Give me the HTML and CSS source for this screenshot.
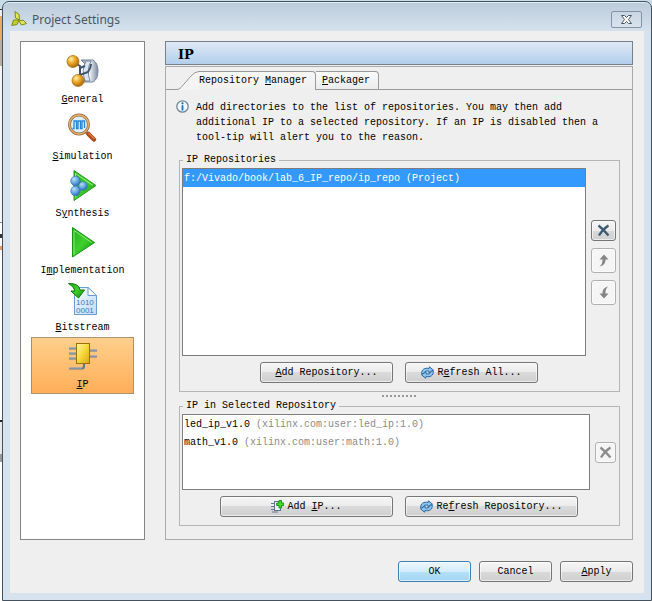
FILE: index.html
```html
<!DOCTYPE html>
<html lang="en">
<head>
    <meta charset="utf-8">
    <title>Project Settings</title>
    <link rel="stylesheet" href="styles.css">
</head>
<body>
    <!-- shared icons -->
    <svg class="defs" width="0" height="0" aria-hidden="true">
        <defs>
            <radialGradient id="gold" cx="35%" cy="30%" r="75%">
                <stop offset="0" stop-color="#fff3b0"/>
                <stop offset="0.4" stop-color="#f0b030"/>
                <stop offset="1" stop-color="#a86408"/>
            </radialGradient>
            <radialGradient id="blueBall" cx="35%" cy="30%" r="75%">
                <stop offset="0" stop-color="#b8e0fb"/>
                <stop offset="0.6" stop-color="#5c9fdc"/>
                <stop offset="1" stop-color="#2f66ad"/>
            </radialGradient>
            <linearGradient id="green" x1="0" y1="0" x2="1" y2="1">
                <stop offset="0" stop-color="#1fae1a"/>
                <stop offset="0.5" stop-color="#3fd02c"/>
                <stop offset="1" stop-color="#0f8a10"/>
            </linearGradient>
            <linearGradient id="steel" x1="0" y1="0" x2="1" y2="0">
                <stop offset="0" stop-color="#76869b"/>
                <stop offset="0.5" stop-color="#eef3f9"/>
                <stop offset="1" stop-color="#7d8a9f"/>
            </linearGradient>
            <linearGradient id="chip" x1="0" y1="0" x2="1" y2="1">
                <stop offset="0" stop-color="#fdf6a8"/>
                <stop offset="0.5" stop-color="#f6d83c"/>
                <stop offset="1" stop-color="#d9a510"/>
            </linearGradient>
            <linearGradient id="page" x1="0" y1="0" x2="1" y2="1">
                <stop offset="0" stop-color="#f4faff"/>
                <stop offset="1" stop-color="#bfdcf5"/>
            </linearGradient>
            <symbol id="icon-refresh" viewBox="0 0 13 13">
                <path d="M0.800 8C0 3.500 4 1.500 8 2.500L8.500 0.800 12.500 4.200 8 7.200 8 5.200C5 4.500 3.200 5.500 3 8z" fill="#8cc4ee" stroke="#1d5d9b" stroke-width="0.900"/>
                <path d="M12.200 5C13 9.500 9 11.500 5 10.500L4.500 12.200 0.500 8.800 5 5.800 5 7.800C8 8.500 9.800 7.500 10 5z" fill="#8cc4ee" stroke="#1d5d9b" stroke-width="0.900"/>
            </symbol>
            <symbol id="icon-up" viewBox="0 0 13 13">
                <path d="M7 0.500L11.500 5.500H8.500C8.500 9 7 11.500 2.500 12.500C5 10.500 5.500 8.500 5.500 5.500H2.500z"/>
            </symbol>
        </defs>
    </svg>

    <div class="dialog">
        <header class="titlebar">
            <svg class="logo" viewBox="0 0 16 16" aria-hidden="true">
                <path d="M4 0.500L8 3.500 8.500 9 4.500 7z" fill="#e2e65a" stroke="#7f8a10"/>
                <path d="M0.800 14.500L2.500 9 8 9 6 13.500z" fill="#c5cf28" stroke="#7f8a10"/>
                <path d="M8 10L12 9 15.500 12.500 10.500 14z" fill="#dfe65c" stroke="#7f8a10"/>
            </svg>
            <h1>Project Settings</h1>
            <button type="button" class="close" aria-label="Close">
                <svg viewBox="0 0 13 11" aria-hidden="true">
                    <path d="M1.500 1.500H4.500L6.500 3.500 8.500 1.500H11.500L8.500 5.500 11.500 9.500H8.500L6.500 7.500 4.500 9.500H1.500L4.500 5.500z" fill="#fff" stroke="#4b5563"/>
                </svg>
            </button>
        </header>

        <div class="content">
            <div class="main">
                <nav class="sidebar">
                    <button type="button" class="nav-item">
                        <svg viewBox="0 0 36 36" aria-hidden="true">
                            <path d="M16 5H28Q33 8 33 16T28 27H18Q23 22 22 15T16 5z" fill="url(#steel)" stroke="#77849a"/>
                            <path d="M21 6Q16 15 20 26L25 26Q21 15 26 6z" fill="#dbe4ef" stroke="#66758c" stroke-width="0.800"/>
                            <path d="M8 7L15 11V20L13 25M15 13L20 11M15 20L23 17Q26 13 26 9" fill="none" stroke="#42536d" stroke-width="2"/>
                            <circle cx="8" cy="6.500" r="6" fill="url(#gold)" stroke="#a4640c" stroke-width="0.700"/>
                            <circle cx="13" cy="25.500" r="6" fill="url(#gold)" stroke="#a4640c" stroke-width="0.700"/>
                        </svg>
                        <span><u>G</u>eneral</span>
                    </button>
                    <button type="button" class="nav-item">
                        <svg viewBox="0 0 36 36" aria-hidden="true">
                            <path d="M20 19L27 26" stroke="#8a7a70" stroke-width="3"/>
                            <path d="M23.500 22L29 27.500" stroke="#b04a1c" stroke-width="4.500" stroke-linecap="round"/>
                            <path d="M24 21.500L29 26.500" stroke="#e07e44" stroke-width="1.300" stroke-linecap="round"/>
                            <circle cx="14" cy="12.500" r="9.500" fill="#ddf0fd" stroke="#8f6b48" stroke-width="2.800"/>
                            <circle cx="14" cy="12.500" r="9.500" fill="none" stroke="#edb269" stroke-width="1.300"/>
                            <path d="M7.500 16.500H9V9H11.500V16.500H13V9H15.500V16.500H17V9H19.500V16" fill="none" stroke="#2485d6" stroke-width="1.300"/>
                        </svg>
                        <span><u>S</u>imulation</span>
                    </button>
                    <button type="button" class="nav-item">
                        <svg viewBox="0 0 36 36" aria-hidden="true">
                            <path d="M9 1.500L31 16.500 9 31.500z" fill="url(#green)" stroke="#2c9a27"/>
                            <path d="M10.500 28.500V4.500L28 16.500" fill="none" stroke="#a4eb8e"/>
                            <circle cx="10.500" cy="12" r="4.800" fill="url(#blueBall)" stroke="#3670b3" stroke-width="0.600"/>
                            <circle cx="18" cy="17" r="4.300" fill="url(#blueBall)" stroke="#3670b3" stroke-width="0.600"/>
                            <circle cx="10.500" cy="22" r="4.800" fill="url(#blueBall)" stroke="#3670b3" stroke-width="0.600"/>
                        </svg>
                        <span>S<u>y</u>nthesis</span>
                    </button>
                    <button type="button" class="nav-item">
                        <svg viewBox="0 0 36 36" aria-hidden="true">
                            <path d="M7.500 1.500L29.500 16.500 7.500 31z" fill="url(#green)" stroke="#169414"/>
                            <path d="M9 28.500V4.500L26.500 16.500" fill="none" stroke="#8fe67c"/>
                        </svg>
                        <span>I<u>m</u>plementation</span>
                    </button>
                    <button type="button" class="nav-item">
                        <svg viewBox="0 0 36 36" aria-hidden="true">
                            <path d="M9.500 4.500H23L31.500 12.500V31.500H9.500z" fill="url(#page)" stroke="#6c9ccb"/>
                            <path d="M23 4.500V12.500H31.500z" fill="#fff" stroke="#6c9ccb"/>
                            <text x="11" y="22" class="bits">1010</text>
                            <text x="11" y="30" class="bits">0001</text>
                            <path d="M3.500 0.500Q14 0 15 7H19.500L13.500 15 6 8H10Q9 3.500 3.500 0.500z" fill="url(#green)" stroke="#14780f"/>
                        </svg>
                        <span><u>B</u>itstream</span>
                    </button>
                    <button type="button" class="nav-item selected">
                        <svg viewBox="0 0 36 36" aria-hidden="true">
                            <path d="M4 8.500H12M4 13.500H12M4 18.500H12M25 10.500H32M25 16.500H32M4 28.500H17Q19 28.500 19 26V23" fill="none" stroke="#66788f" stroke-width="2.200"/>
                            <path d="M4 8H12M4 13H12M4 18H12M25 10H32M25 16H32M4 28H17" fill="none" stroke="#b3c1d2" stroke-width="0.800"/>
                            <rect x="11.500" y="3.500" width="13" height="20" fill="url(#chip)" stroke="#9c7208"/>
                        </svg>
                        <span><u>I</u>P</span>
                    </button>
                </nav>

                <section class="page">
                    <h2>IP</h2>
                    <div class="panel">
                        <div class="tabs" role="tablist">
                            <button type="button" class="tab active" role="tab" aria-selected="true">
                                <svg viewBox="0 0 22 19" aria-hidden="true">
                                    <path d="M0 19V18.500Q2 18.500 4 16.500L14 5Q18 0.500 22 0.500V19z" fill="#f4f4f4"/>
                                    <path d="M0 18.500Q2 18.500 4 16.500L14 5Q18 0.500 22 0.500" fill="none" stroke="#999"/>
                                </svg>
                                <span>Repository <u>M</u>anager</span>
                            </button>
                            <button type="button" class="tab" role="tab" aria-selected="false"><span><u>P</u>ackager</span></button>
                        </div>

                        <div class="info">
                            <svg viewBox="0 0 13 13" aria-hidden="true">
                                <circle cx="6.500" cy="6.500" r="5.700" fill="#f3f9fd" stroke="#6d8797" stroke-width="1.300"/>
                                <path d="M6.500 5.200V10.500" stroke="#1c6bb5" stroke-width="1.800"/>
                                <circle cx="6.500" cy="3.300" r="1.100" fill="#1c6bb5"/>
                            </svg>
                            <p>Add directories to the list of repositories. You may then add additional IP to a selected repository. If an IP is disabled then a tool-tip will alert you to the reason.</p>
                        </div>

                        <fieldset class="group grow">
                            <legend>IP Repositories</legend>
                            <div class="list-row">
                                <ul class="list" role="listbox" aria-label="IP Repositories">
                                    <li class="selected" role="option" aria-selected="true">f:/Vivado/book/lab_6_IP_repo/ip_repo (Project)</li>
                                </ul>
                                <div class="side-buttons">
                                    <button type="button" class="btn tool" aria-label="Remove repository">
                                        <svg viewBox="0 0 13 13" aria-hidden="true">
                                            <path d="M1.500 1.500Q6 5 11.500 11.500M11.500 1.500Q6 5 2 11.500" fill="none" stroke="#3d5a73" stroke-width="2.300"/>
                                        </svg>
                                    </button>
                                    <button type="button" class="btn tool tall" disabled aria-label="Move up">
                                        <svg viewBox="0 0 13 13" aria-hidden="true"><use href="#icon-up" fill="#858585"/></svg>
                                    </button>
                                    <button type="button" class="btn tool tall" disabled aria-label="Move down">
                                        <svg viewBox="0 0 13 13" aria-hidden="true">
                                            <path d="M7 12.500L11.500 7.500H8.500C8.200 4.500 9 2.500 11 0.500C7 1.500 5.500 4 5.500 7.500H2.500z" fill="#858585"/>
                                        </svg>
                                    </button>
                                </div>
                            </div>
                            <div class="actions">
                                <button type="button" class="btn medium"><span><u>A</u>dd Repository...</span></button>
                                <button type="button" class="btn medium">
                                    <svg viewBox="0 0 13 13" aria-hidden="true"><use href="#icon-refresh"/></svg>
                                    <span>R<u>e</u>fresh All...</span>
                                </button>
                            </div>
                        </fieldset>

                        <div class="splitter"></div>

                        <fieldset class="group">
                            <legend>IP in Selected Repository</legend>
                            <div class="list-row">
                                <ul class="list short" role="listbox" aria-label="IP in Selected Repository">
                                    <li role="option">led_ip_v1.0 <span>(xilinx.com:user:led_ip:1.0)</span></li>
                                    <li role="option">math_v1.0 <span>(xilinx.com:user:math:1.0)</span></li>
                                </ul>
                                <div class="side-buttons">
                                    <button type="button" class="btn tool small" disabled aria-label="Remove IP">
                                        <svg viewBox="0 0 13 13" aria-hidden="true">
                                            <path d="M1.500 1.500Q6 5 11.500 11.500M11.500 1.500Q6 5 2 11.500" fill="none" stroke="#8c8c8c" stroke-width="2.300"/>
                                        </svg>
                                    </button>
                                </div>
                            </div>
                            <div class="actions">
                                <button type="button" class="btn wide">
                                    <svg viewBox="0 0 13 13" aria-hidden="true">
                                        <path d="M0 3.500H4M0 6.500H4M0 9.500H4M1 12H7" stroke="#66788f"/>
                                        <rect x="3.500" y="1.500" width="6" height="9" fill="#e6f0f8" stroke="#587593"/>
                                        <path d="M8 0.500H10.500V3H12.800V5.500H10.500V8H8V5.500H5.700V3H8z" fill="#45d92b" stroke="#168a12" stroke-width="0.900"/>
                                    </svg>
                                    <span>Add <u>I</u>P...</span>
                                </button>
                                <button type="button" class="btn wide">
                                    <svg viewBox="0 0 13 13" aria-hidden="true"><use href="#icon-refresh"/></svg>
                                    <span>Re<u>f</u>resh Repository...</span>
                                </button>
                            </div>
                        </fieldset>
                    </div>
                </section>
            </div>

            <footer class="footer">
                <button type="button" class="btn default">OK</button>
                <button type="button" class="btn">Cancel</button>
                <button type="button" class="btn"><span><u>A</u>pply</span></button>
            </footer>
        </div>
    </div>
</body>
</html>
```
FILE: styles.css
```css
* {
    box-sizing: border-box;
}

body {
    display: flex;
    min-height: 100vh;
    margin: 0;
    padding: 1px 0 0 2px;
    font-family: "Liberation Mono", monospace;
    font-size: 10px;
    color: #000;
    /* edge of the window behind the dialog */
    background: linear-gradient(#c9dde8 0 9px, #333 9px 10px, #eee 10px 16px, #f0a860 16px 40px, #b8b0a0 40px 66px, #f4f4f4 66px 222px, #888 222px 223px, #fff 223px 234px, #333 234px 238px, #fff 238px 246px, #e2a070 246px 250px, #fff 250px 420px, #222 420px 422px, #e8e8e8 422px 454px, #999 454px 462px, #fff 462px);
}

button {
    padding: 0;
    font: inherit;
    color: inherit;
    cursor: pointer;
}

u {
    text-underline-offset: 1px;
}

.defs {
    position: absolute;
}

.dialog {
    flex: 1;
    display: flex;
    flex-direction: column;
    padding: 0 7px 7px;
    border: 1px solid #45525e;
    border-radius: 7px 7px 0 0;
    background: linear-gradient(#bccbda, #d6e3ef 30px);
    box-shadow: inset 0 1px 0 #e3edf5;
}

/* title bar */
.titlebar {
    display: flex;
    align-items: center;
    gap: 5px;
    height: 29px;
    padding: 5px 2px 0 1px;
}

.logo {
    width: 16px;
    height: 16px;
}

.titlebar h1 {
    flex: 1;
    margin: 0;
    font: 12px "Noto Sans", sans-serif;
    color: #4c555e;
}

.close {
    display: flex;
    align-items: center;
    justify-content: center;
    width: 31px;
    height: 17px;
    border: 1px solid #8592a3;
    border-radius: 2px;
    background: linear-gradient(#c9d6e3, #d8e3ee);
}

.close svg {
    width: 13px;
    height: 11px;
}

/* body of the dialog */
.content {
    flex: 1;
    display: flex;
    flex-direction: column;
    gap: 21px;
    padding: 10px 11px 11px 10px;
    background: #efefef;
}

.main {
    flex: 1;
    display: grid;
    grid-template-columns: 125px 1fr;
    gap: 20px;
}

.sidebar {
    padding: 10px;
    border: 1px solid #858585;
    background: #fff;
}

.nav-item {
    display: flex;
    flex-direction: column;
    align-items: center;
    width: 100%;
    height: 57px;
    padding-top: 2px;
    border: 1px solid transparent;
    background: none;
    line-height: 18px;
}

.nav-item.selected {
    border-color: #a8926f;
    background: linear-gradient(#ffcf8c, #ffae58);
}

.nav-item svg {
    flex: none;
    width: 36px;
    height: 36px;
}

.bits {
    font-family: "Liberation Sans", sans-serif;
    font-size: 8px;
    fill: #3f78bd;
}

.page {
    display: flex;
    flex-direction: column;
}

.page h2 {
    margin: 0 0 1px;
    padding: 2px 0 0 12px;
    border: 1px solid #77818c;
    background: linear-gradient(#dfe9f4, #b2cfec);
    font: bold 13px/20px "DejaVu Serif", serif;
    line-height: 22px;
    height: 24px;
}

.panel {
    flex: 1;
    display: flex;
    flex-direction: column;
    padding-bottom: 13px;
    border: 1px solid #aaa;
}

/* tabs */
.tabs {
    display: flex;
    align-items: flex-end;
    height: 23px;
    padding-left: 11px;
    border-bottom: 1px solid #999;
}

.tab {
    display: flex;
    height: 19px;
    margin-bottom: -1px;
    border: none;
    background: none;
    line-height: 18px;
}

.tab svg {
    width: 22px;
    height: 19px;
}

.tab span {
    height: 19px;
    padding: 0 8px 0 6px;
    border: 1px solid #999;
    border-left: none;
    border-radius: 0 4px 0 0;
    background: linear-gradient(#fafafa, #ececec);
}

.tab.active span {
    padding-left: 0;
    border-bottom: none;
    background: linear-gradient(#f7f7f7, #efefef);
}

.info {
    display: flex;
    gap: 7px;
    padding: 10px 12px 9px 10px;
}

.info svg {
    flex: none;
    width: 13px;
    height: 13px;
}

.info p {
    margin: 0;
    line-height: 15px;
}

/* groups */
.group {
    display: flex;
    flex-direction: column;
    gap: 6px;
    min-width: 0;
    margin: 0 12px 0 13px;
    padding: 2px 3px 8px 2px;
    border: 1px solid #b5b5b5;
}

.group.grow {
    flex: 1;
}

.group legend {
    margin-left: 1px;
    padding: 0 3px;
    line-height: 12px;
}

.list-row {
    flex: 1;
    display: flex;
    align-items: center;
    gap: 5px;
}

.list {
    flex: 1;
    align-self: stretch;
    margin: 0;
    padding: 0;
    border: 1px solid #7d7d7d;
    background: #fff;
    list-style: none;
}

.list.short {
    height: 76px;
}

.list li {
    padding-left: 1px;
    line-height: 19px;
    height: 18px;
}

.list li span {
    color: #8a8a8a;
}

.list li.selected {
    background: #3399ff;
    color: #fff;
}

.side-buttons {
    display: flex;
    flex-direction: column;
    gap: 7px;
}

.actions {
    display: flex;
    justify-content: center;
    gap: 12px;
}

.splitter {
    width: 35px;
    height: 2px;
    margin: 3px auto;
    background: repeating-linear-gradient(to right, #999 0 2px, transparent 2px 4px);
}

/* buttons */
.btn {
    display: flex;
    align-items: center;
    justify-content: center;
    gap: 3px;
    width: 73px;
    height: 21px;
    border: 1px solid #757575;
    border-radius: 3px;
    background: linear-gradient(#f5f5f5, #ebebeb 50%, #dadada 50%, #cfcfcf);
    box-shadow: inset 0 0 0 1px rgba(255, 255, 255, 0.6);
}

.btn:disabled {
    border-color: #b0b0b0;
    background: #f5f5f5;
    cursor: default;
}

.btn svg {
    width: 13px;
    height: 13px;
}

.btn.medium {
    width: 133px;
}

.btn.wide {
    width: 173px;
}

.btn.tool {
    width: 25px;
}

.btn.tool.small {
    width: 21px;
}

.btn.tool.tall {
    height: 25px;
}

.btn.default {
    border-color: #3c7fb1;
    background: linear-gradient(#eaf6fd, #d4edfb 50%, #b6e0f8 50%, #a2d6f4);
}

.footer {
    display: flex;
    justify-content: flex-end;
    gap: 8px;
}
```
